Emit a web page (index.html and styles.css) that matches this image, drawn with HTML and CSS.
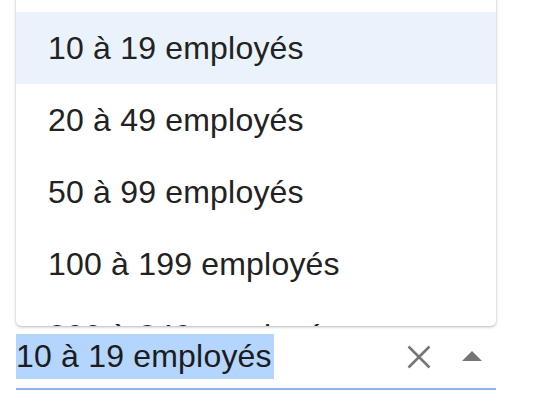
FILE: index.html
```html
<!DOCTYPE html>
<html lang="fr">
<head>
<meta charset="utf-8">
<link rel="stylesheet" href="styles.css">
</head>
<body>
<div class="field">
  <div class="menu">
    <ul class="list">
      <li class="option">1 à 9 employés</li>
      <li class="option active">10 à 19 employés</li>
      <li class="option">20 à 49 employés</li>
      <li class="option">50 à 99 employés</li>
      <li class="option">100 à 199 employés</li>
      <li class="option">200 à 249 employés</li>
    </ul>
  </div>
  <div class="control">
    <span class="value">10 à 19 employés</span>
    <div class="actions">
      <svg class="clear" width="24" height="24" viewBox="0 0 24 24"><path d="M1.5 1.5 L22.5 22.5 M22.5 1.5 L1.5 22.5" stroke="#757575" stroke-width="2.5" fill="none"/></svg>
      <svg class="caret" width="20" height="10" viewBox="0 0 20 10"><path d="M0 10 L10 0 L20 10 Z" fill="#757575"/></svg>
    </div>
  </div>
</div>
</body>
</html>
```
FILE: styles.css
```css
html, body {
  margin: 0;
  padding: 0;
  background: #ffffff;
  overflow: hidden;
}
body {
  font-family: "Liberation Sans", Arial, sans-serif;
  color: #222222;
}
.field {
  width: 480px;
  margin-left: 16px;
}
.menu {
  margin-top: -60px;
  height: 386px;
  overflow: hidden;
  background: #ffffff;
  border-radius: 5px;
  box-shadow: 0 1px 3px rgba(0, 0, 0, 0.28), 0 0 1px rgba(0, 0, 0, 0.12);
}
.list {
  list-style: none;
  margin: 0;
  padding: 0;
}
.option {
  height: 72px;
  line-height: 72px;
  padding-left: 32px;
  font-size: 32px;
  letter-spacing: 0.2px;
  white-space: nowrap;
}
.option.active {
  background: #eaf2fc;
}
.control {
  display: flex;
  align-items: center;
  margin-top: 8px;
  padding-bottom: 9px;
  border-bottom: 2px solid #8fb3ea;
}
.value {
  display: inline-block;
  height: 45px;
  line-height: 45px;
  padding-right: 2px;
  font-size: 32px;
  letter-spacing: 0.2px;
  background: #b4d5fe;
  color: #1c1c1c;
  white-space: nowrap;
}
.actions {
  margin-left: auto;
  display: flex;
  align-items: center;
  gap: 31px;
  padding-right: 14px;
}
.clear {
  display: block;
}
.caret {
  display: block;
  margin-top: -2px;
}
```
